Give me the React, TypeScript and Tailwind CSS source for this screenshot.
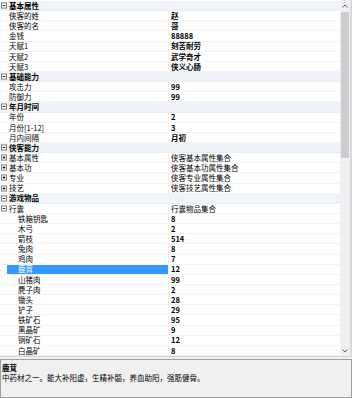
import React from 'react';

type Row = {
  name: string;
  value?: string;
  cat?: boolean;
  icon?: 'open' | 'closed';
  level?: number;
  bold?: boolean;
  selected?: boolean;
};

const rows: Row[] = [
  { name: '基本属性', cat: true, icon: 'open' },
  { name: '侠客的姓', value: '赵', bold: true },
  { name: '侠客的名', value: '哥', bold: true },
  { name: '金钱', value: '88888', bold: true },
  { name: '天赋1', value: '刻苦耐劳', bold: true },
  { name: '天赋2', value: '武学奇才', bold: true },
  { name: '天赋3', value: '侠义心肠', bold: true },
  { name: '基础能力', cat: true, icon: 'open' },
  { name: '攻击力', value: '99', bold: true },
  { name: '防御力', value: '99', bold: true },
  { name: '年月时间', cat: true, icon: 'open' },
  { name: '年份', value: '2', bold: true },
  { name: '月份[1-12]', value: '3', bold: true },
  { name: '月内间隔', value: '月初', bold: true },
  { name: '侠客能力', cat: true, icon: 'open' },
  { name: '基本属性', value: '侠客基本属性集合', icon: 'closed' },
  { name: '基本功', value: '侠客基本功属性集合', icon: 'closed' },
  { name: '专业', value: '侠客专业属性集合', icon: 'closed' },
  { name: '技艺', value: '侠客技艺属性集合', icon: 'closed' },
  { name: '游戏物品', cat: true, icon: 'open' },
  { name: '行囊', value: '行囊物品集合', icon: 'open' },
  { name: '铁箱钥匙', value: '8', level: 2, bold: true },
  { name: '木弓', value: '2', level: 2, bold: true },
  { name: '箭枝', value: '514', level: 2, bold: true },
  { name: '兔肉', value: '8', level: 2, bold: true },
  { name: '鸡肉', value: '7', level: 2, bold: true },
  { name: '鹿茸', value: '12', level: 2, bold: true, selected: true },
  { name: '山猪肉', value: '99', level: 2, bold: true },
  { name: '麂子肉', value: '2', level: 2, bold: true },
  { name: '锄头', value: '28', level: 2, bold: true },
  { name: '铲子', value: '29', level: 2, bold: true },
  { name: '铁矿石', value: '95', level: 2, bold: true },
  { name: '黑晶矿', value: '9', level: 2, bold: true },
  { name: '铜矿石', value: '12', level: 2, bold: true },
  { name: '白晶矿', value: '8', level: 2, bold: true },
];

function Expander({ open }: { open: boolean }) {
  return (
    <svg width="7" height="7" viewBox="0 0 7 7" className="block">
      <rect x="0.5" y="0.5" width="6" height="6" fill="white" stroke="#6f6f6f" />
      <line x1="2" y1="3.5" x2="5" y2="3.5" stroke="#000" />
      {!open && <line x1="3.5" y1="2" x2="3.5" y2="5" stroke="#000" />}
    </svg>
  );
}

function GridRow({ row }: { row: Row }) {
  if (row.cat) {
    return (
      <div className="h-[10.15px] flex items-center bg-[#f0f4f9] border-b border-[#e8edf3]">
        <div className="w-[7px] pl-[1px] flex items-center">
          <Expander open={row.icon === 'open'} />
        </div>
        <div className="pl-[2px] font-bold leading-none">{row.name}</div>
      </div>
    );
  }
  return (
    <div className="h-[10.15px] flex border-b border-[#f3f3f3]">
      <div className="w-[169px] flex border-r border-[#f0f0f0]">
        <div className="w-[7px] pl-[1px] flex items-center">
          {row.icon && <Expander open={row.icon === 'open'} />}
        </div>
        <div
          className={`flex-1 flex items-center leading-none ${row.level === 2 ? 'pl-[11px]' : 'pl-[2px]'} ${
            row.selected ? 'bg-[#3399ff] text-white' : ''
          }`}
        >
          {row.name}
        </div>
      </div>
      <div className={`flex-1 flex items-center pl-[2px] leading-none ${row.bold ? 'font-bold' : ''}`}>
        {row.value}
      </div>
    </div>
  );
}

export default function App() {
  return (
    <div
      className="w-[352px] h-[398px] flex flex-col bg-white text-black text-[7.5px] overflow-hidden"
      style={{ fontFamily: '"Noto Sans CJK SC", "Noto Sans", sans-serif' }}
    >
      {/* Property list + scrollbar */}
      <div className="h-[357px] flex border-b border-[#d4d4d4]">
        <div className="w-[340px] overflow-hidden pt-[1px]">
          {rows.map((r, i) => (
            <GridRow key={i} row={r} />
          ))}
        </div>
        <div className="w-[10px] flex flex-col bg-[#f0f0f0]">
          <div className="h-[12px] flex items-center justify-center">
            <svg width="6" height="4" viewBox="0 0 6 4">
              <path d="M0.5 3.5 L3 1 L5.5 3.5" fill="none" stroke="#606060" strokeWidth="1" />
            </svg>
          </div>
          <div className="h-[146px] mx-[1px] bg-[#cdcdcd]" />
          <div className="flex-1" />
          <div className="h-[10px] flex items-center justify-center">
            <svg width="6" height="4" viewBox="0 0 6 4">
              <path d="M0.5 0.5 L3 3 L5.5 0.5" fill="none" stroke="#606060" strokeWidth="1" />
            </svg>
          </div>
        </div>
        <div className="w-[2px] bg-[#d3dbe4]" />
      </div>

      {/* Splitter */}
      <div className="h-[2px] bg-[#f0f0f0]" />

      {/* Description */}
      <div className="flex-1 bg-[#f0f0f0] border border-[#a0a0a0] px-[1px] pt-[3px]">
        <div className="font-bold leading-[10px]">鹿茸</div>
        <div className="leading-[10px]">中药材之一。能大补阳虚，生精补髓，养血助阳，强筋健骨。</div>
      </div>
    </div>
  );
}
